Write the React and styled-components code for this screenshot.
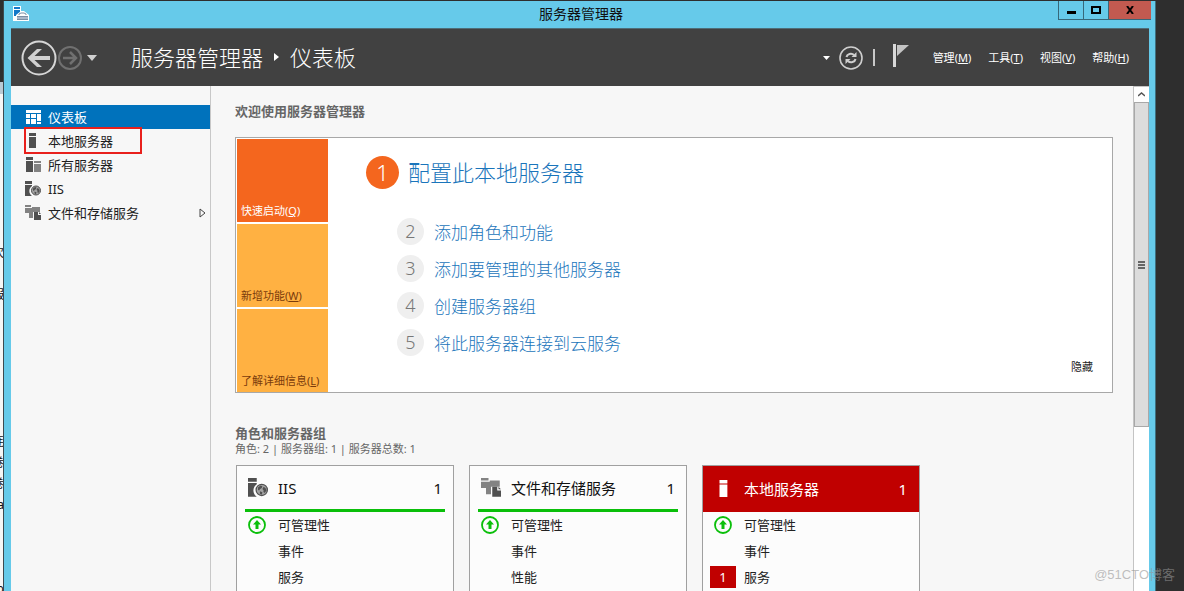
import styled, { createGlobalStyle, css } from 'styled-components';

//DATA
const navItems = [
  { label: '仪表板', icon: 'dashboard', active: true },
  { label: '本地服务器', icon: 'server', marked: true },
  { label: '所有服务器', icon: 'servers' },
  { label: 'IIS', icon: 'iis' },
  { label: '文件和存储服务', icon: 'files', expandable: true },
];

const menus = [
  { label: '管理', hotkey: 'M' },
  { label: '工具', hotkey: 'T' },
  { label: '视图', hotkey: 'V' },
  { label: '帮助', hotkey: 'H' },
];

const tabs = [
  { label: '快速启动', hotkey: 'Q', active: true },
  { label: '新增功能', hotkey: 'W' },
  { label: '了解详细信息', hotkey: 'L' },
];

const steps = [
  '配置此本地服务器',
  '添加角色和功能',
  '添加要管理的其他服务器',
  '创建服务器组',
  '将此服务器连接到云服务',
];

const cards = [
  { title: 'IIS', icon: 'iis', rows: ['可管理性', '事件', '服务'] },
  { title: '文件和存储服务', icon: 'files', rows: ['可管理性', '事件', '性能'] },
  { title: '本地服务器', icon: 'server', alert: '服务', rows: ['可管理性', '事件', '服务'] },
];

const backLines = ['次', '', '服', '', '', '', '', '', '', '连', '卷', '卷', 'a', '', '', '', 'b'];

//ICONS
const Icon = ({ name, size = 16 }) => (
  <svg width={size} height={size} viewBox="0 0 16 16" fill="currentColor" aria-hidden="true">
    {name === 'dashboard' && (
      <path d="M1 1h15v3H1zM1 5h4v4H1zM6 5h5v4H6zM12 5h4v7h-4zM1 10h4v5H1zM6 10h5v5H6zM12 13h4v2h-4z" />
    )}
    {name === 'server' && <path d="M4 0h7v3H4zM4 4h7v11H4z" />}
    {name === 'servers' && (
      <>
        <path d="M1 0h7v3H1zM1 4h7v11H1z" />
        <path d="M9 4h7v2H9zM9 7h7v8H9z" opacity="0.7" />
      </>
    )}
    {name === 'iis' && (
      <>
        <path d="M0 0h7v3H0zM0 4h7v1a6 6 0 0 0 0 10H0z" />
        <circle cx="11" cy="9.500" r="4.500" fill="#a4a4a4" stroke="currentColor" strokeWidth="1" />
        <path d="M8 7.500l2-1.500 1.500.5-.5 1.500L9.500 9l-.5 1-1-.5zM12.500 7l1.500 1 .8 2-1.500 2-1-.8.2-1.500-1-1zM9.500 10.500l2 .8-.5 2-1.500-.8z" />
      </>
    )}
    {name === 'files' && (
      <>
        <path d="M0 0h6v2H0zM0 3h7V2h8v5H8v6H4V8H0z" opacity="0.7" />
        <path d="M9 7h4v3h3v5H9zM14 7l2 2h-2z" />
      </>
    )}
  </svg>
);

const AppIcon = () => (
  <svg width="16" height="16" viewBox="0 0 16 16" aria-hidden="true">
    <path d="M0 0h8v15H0z" fill="#fff" />
    <path d="M1 1h6v2H1zM1 4h6v3L4 9v1H1z" fill="#1378c8" />
    <path d="M3 9l5-4h3l5 4v6H3z" fill="#fff" />
    <path d="M4 10h11v4H4z" fill="#7c8ea4" />
    <path d="M6 9V8l2-1h3l2 1v1" fill="none" stroke="#7c8ea4" />
    <path d="M4 12h11" stroke="#d8e2ee" />
  </svg>
);

const BackIcon = () => (
  <svg width="36" height="36" viewBox="0 0 36 36" aria-hidden="true">
    <circle cx="18" cy="18" r="16.500" fill="none" stroke="#d6d6d6" strokeWidth="2" />
    <path d="M6.500 18L16 9h5l-7.500 7H29v4H13.500l7.500 7h-5z" fill="#d0d0d0" />
  </svg>
);

const ForwardIcon = () => (
  <svg width="24" height="24" viewBox="0 0 24 24" fill="none" stroke="#707070" aria-hidden="true">
    <circle cx="12" cy="12" r="11" strokeWidth="2" />
    <path d="M5 12h13M12 6l6 6-6 6" strokeWidth="2.500" />
  </svg>
);

const RefreshIcon = () => (
  <svg width="24" height="24" viewBox="0 0 24 24" fill="none" stroke="#cfcfcf" aria-hidden="true">
    <circle cx="12" cy="12" r="11" strokeWidth="1.600" />
    <path d="M7.500 11c.5-3 5-4.500 7.500-2M16.500 13c-.5 3-5 4.500-7.500 2" strokeWidth="2" />
    <path d="M17.500 6v5h-5zM6.500 18v-5h5z" fill="#cfcfcf" stroke="none" />
  </svg>
);

const FlagIcon = () => (
  <svg width="16" height="23" viewBox="0 0 16 23" aria-hidden="true">
    <path d="M0 0h3v23H0z" fill="#d8d8d8" />
    <path d="M4 1h12L4 12z" fill="#c4c4c4" />
  </svg>
);

const UpIcon = () => (
  <svg width="18" height="18" viewBox="0 0 18 18" aria-hidden="true">
    <circle cx="9" cy="9" r="8" fill="none" stroke="#0abf0a" strokeWidth="1.800" />
    <path d="M9 4l4 4.500h-2.500V13h-3V8.500H5z" fill="#0abf0a" />
  </svg>
);

const App = () => {
  return (
    <Desktop>
      <GlobalStyle />
      <BackWindow aria-hidden="true">
        {backLines.map((line, i) => (
          <span key={i}>{line}</span>
        ))}
      </BackWindow>
      <Window>
        <TitleBar>
          <AppIcon />
          <h1>服务器管理器</h1>
          <WindowButtons>
            <WindowButton aria-label="最小化">
              <svg width="10" height="8"><path d="M1 5h9v3H1z" /></svg>
            </WindowButton>
            <WindowButton aria-label="最大化">
              <svg width="10" height="8"><path d="M1 1h8v6H1z" fill="none" stroke="#000" strokeWidth="2" /></svg>
            </WindowButton>
            <WindowButton $close aria-label="关闭">
              <svg width="8" height="8"><path d="M1 0l6 8M7 0L1 8" stroke="#000" strokeWidth="2" /></svg>
            </WindowButton>
          </WindowButtons>
        </TitleBar>

        <Toolbar>
          <History>
            <IconButton aria-label="后退"><BackIcon /></IconButton>
            <IconButton aria-label="前进"><ForwardIcon /></IconButton>
            <HistoryButton aria-label="历史记录">
              <svg width="10" height="6"><path d="M0 0h10L5 6z" fill="#d0d0d0" /></svg>
            </HistoryButton>
          </History>
          <Breadcrumb>
            <span>服务器管理器</span>
            <svg width="5" height="8"><path d="M0 0l5 4-5 4z" fill="#fff" /></svg>
            <span>仪表板</span>
          </Breadcrumb>
          <Tools>
            <IconButton aria-label="更多">
              <svg width="7" height="4"><path d="M0 0h7L3.500 4z" fill="#fff" /></svg>
            </IconButton>
            <IconButton aria-label="刷新"><RefreshIcon /></IconButton>
            <Separator />
            <IconButton aria-label="通知"><FlagIcon /></IconButton>
          </Tools>
          <Menus>
            {menus.map((menu) => (
              <MenuButton key={menu.hotkey}>
                {menu.label}(<u>{menu.hotkey}</u>)
              </MenuButton>
            ))}
          </Menus>
        </Toolbar>

        <Body>
          <Sidebar>
            {navItems.map((item) => (
              <NavLink key={item.label} href="#" $active={item.active} $marked={item.marked}>
                <Icon name={item.icon} />
                <span>{item.label}</span>
                {item.expandable && (
                  <svg width="7" height="10">
                    <path d="M1 1l5 4-5 4z" fill="none" stroke="#444" />
                  </svg>
                )}
              </NavLink>
            ))}
          </Sidebar>

          <Main>
            <WelcomeTitle>欢迎使用服务器管理器</WelcomeTitle>
            <Welcome>
              <Tabs>
                {tabs.map((tab) => (
                  <Tab key={tab.hotkey} $active={tab.active}>
                    <span>{tab.label}(<u>{tab.hotkey}</u>)</span>
                  </Tab>
                ))}
              </Tabs>
              <Steps>
                {steps.map((step, i) => (
                  <Step key={step} $first={i === 0}>
                    <b>{i + 1}</b>
                    <a href="#">{step}</a>
                  </Step>
                ))}
              </Steps>
              <HideButton>隐藏</HideButton>
            </Welcome>

            <GroupsTitle>角色和服务器组</GroupsTitle>
            <Summary>角色: 2 | 服务器组: 1 | 服务器总数: 1</Summary>
            <Cards>
              {cards.map((card) => (
                <Card key={card.title}>
                  <CardHeader $alert={card.alert}>
                    <Icon name={card.icon} size={card.alert ? 18 : 20} />
                    <h3>{card.title}</h3>
                    <span>1</span>
                  </CardHeader>
                  {card.rows.map((row) => (
                    <CardRow key={row}>
                      <Status>
                        {row === '可管理性' && <UpIcon />}
                        {row === card.alert && <Badge>1</Badge>}
                      </Status>
                      <a href="#">{row}</a>
                    </CardRow>
                  ))}
                </Card>
              ))}
            </Cards>
          </Main>

          <Scrollbar>
            <ScrollButton aria-label="向上滚动">
              <svg width="7" height="5"><path d="M0 4l3.500-3L7 4" fill="none" stroke="#555" strokeWidth="1.500" /></svg>
            </ScrollButton>
            <Thumb>
              <svg width="7" height="8"><path d="M0 1h7M0 4h7M0 7h7" stroke="#666" strokeWidth="2" /></svg>
            </Thumb>
          </Scrollbar>
        </Body>
      </Window>
      <Watermark>@51CTO博客</Watermark>
    </Desktop>
  );
};

//Styled Components
const GlobalStyle = createGlobalStyle`
  * {
    box-sizing: border-box;
    margin: 0;
    padding: 0;
  }
  body {
    font-family: 'Noto Sans', 'Noto Sans CJK SC', sans-serif;
    font-size: 13px;
    color: #222;
    background: #2e2e2e;
  }
  button {
    font: inherit;
    color: inherit;
    border: none;
    background: none;
  }
  a {
    color: inherit;
    text-decoration: none;
  }
  svg {
    display: block;
    flex: none;
  }
`;

const Desktop = styled.div`
  position: relative;
  display: flex;
  height: 100vh;
  padding: 1px 29px 0 0;
  overflow: hidden;
`;

const BackWindow = styled.div`
  display: flex;
  flex-direction: column;
  flex: none;
  width: 4px;
  margin-top: 81px;
  padding-top: 148px;
  overflow: hidden;
  border-top: 12px solid #b9c9d3;
  background: #f6f6f6;
  font-size: 12px;
  color: #111;
  span {
    display: flex;
    justify-content: flex-end;
    flex: none;
    height: 21px;
    line-height: 21px;
  }
`;

const Window = styled.div`
  display: flex;
  flex-direction: column;
  flex: 1;
  min-width: 0;
  border: solid #66caea;
  border-width: 0 6px 0 7px;
  box-shadow: 1px 0 #3c6f80, -1px 0 #3c4a50;
`;

const TitleBar = styled.header`
  display: grid;
  grid-template-columns: 1fr auto 1fr;
  flex: none;
  height: 27px;
  padding-left: 2px;
  background: #66caea;
  > svg {
    margin-top: 5px;
  }
  h1 {
    font-size: 14px;
    font-weight: normal;
    line-height: 26px;
    color: #111;
  }
`;

const WindowButtons = styled.div`
  display: flex;
  justify-self: end;
  height: 19px;
  margin-right: -2px;
`;

const WindowButton = styled.button`
  display: flex;
  align-items: center;
  justify-content: center;
  width: ${({ $close }) => ($close ? '43px' : '25px')};
  border: solid #37687a;
  border-width: 0 0 1px 1px;
  background: ${({ $close }) => ($close ? '#c25a50' : 'transparent')};
`;

const Toolbar = styled.div`
  display: flex;
  align-items: center;
  flex: none;
  height: 58px;
  padding: 0 20px 0 10px;
  border-top: 1px solid #4f6d78;
  background: #414141;
  color: #fff;
`;

const IconButton = styled.button`
  flex: none;
`;

const History = styled.div`
  display: flex;
  align-items: center;
  gap: 1px;
`;

const HistoryButton = styled(IconButton)`
  margin-left: 4px;
`;

const Breadcrumb = styled.div`
  display: flex;
  align-items: center;
  gap: 11px;
  margin-left: 34px;
  padding-bottom: 2px;
  font-size: 22px;
  font-weight: 300;
  line-height: 30px;
  white-space: nowrap;
`;

const Tools = styled.div`
  display: flex;
  align-items: center;
  gap: 9px;
  margin-left: auto;
  ${IconButton}:last-child {
    margin: 0 0 4px 9px;
  }
`;

const Separator = styled.span`
  width: 2px;
  height: 17px;
  margin-left: 1px;
  background: #c8c8c8;
`;

const Menus = styled.nav`
  display: flex;
  gap: 17px;
  margin-left: 24px;
`;

const MenuButton = styled.button`
  font-size: 11px;
  line-height: 16px;
  white-space: nowrap;
`;

const Body = styled.div`
  display: flex;
  flex: 1;
  min-height: 0;
  background: #f7f7f7;
`;

const Sidebar = styled.nav`
  flex: none;
  width: 200px;
  padding-top: 19px;
  border-right: 1px solid #c8c8c8;
`;

const NavLink = styled.a`
  position: relative;
  display: flex;
  align-items: center;
  gap: 7px;
  height: 24px;
  padding: 0 4px 0 14px;
  color: #1e1e1e;
  > svg:first-child {
    color: #505050;
  }
  span {
    flex: 1;
    line-height: 22px;
  }
  ${({ $active }) =>
    $active &&
    css`
      background: #0072bc;
      color: #fff;
      > svg:first-child {
        color: #fff;
      }
    `}
  ${({ $marked }) =>
    $marked &&
    css`
      &::after {
        content: '';
        position: absolute;
        inset: -2px 68px -1px 13px;
        border: 2px solid #e8201c;
      }
    `}
`;

const Main = styled.main`
  flex: 1;
  min-width: 0;
  padding: 15px 20px 0 24px;
  overflow: hidden;
`;

const WelcomeTitle = styled.h2`
  font-size: 13px;
  line-height: 20px;
  color: #666;
`;

const Welcome = styled.section`
  display: flex;
  margin-top: 16px;
  padding: 1px 1px 0;
  border: 1px solid #a8a8a8;
  background: #fff;
`;

const Tabs = styled.div`
  display: flex;
  flex-direction: column;
  flex: none;
  gap: 2px;
  width: 91px;
`;

const Tab = styled.button`
  display: flex;
  align-items: flex-end;
  height: 83px;
  padding: 0 4px 3px;
  background: ${({ $active }) => ($active ? '#f4661e' : '#ffb142')};
  color: ${({ $active }) => ($active ? '#fff' : '#7a3b0c')};
  font-size: 11px;
  line-height: 16px;
  white-space: nowrap;
`;

const Steps = styled.ol`
  flex: 1;
  padding: 17px 0 0 38px;
  list-style: none;
`;

const Step = styled.li`
  display: flex;
  align-items: center;
  gap: 10px;
  height: 37px;
  padding-left: 31px;
  font-size: 17px;
  font-weight: 300;
  color: #1a75bb;
  a {
    padding-bottom: 1px;
  }
  b {
    width: 27px;
    border-radius: 50%;
    background: #efefef;
    color: #777;
    font-size: 18px;
    font-weight: 300;
    line-height: 27px;
    text-align: center;
  }
  ${({ $first }) =>
    $first &&
    css`
      gap: 9px;
      height: 33px;
      margin-bottom: 24px;
      padding-left: 0;
      font-size: 22px;
      a {
        padding-bottom: 3px;
      }
      b {
        width: 33px;
        background: #f4661e;
        color: #fff;
        font-size: 22px;
        line-height: 33px;
      }
    `}
`;

const HideButton = styled.button`
  align-self: flex-end;
  margin: 0 18px 17px 0;
  font-size: 11px;
  line-height: 16px;
`;

const GroupsTitle = styled.h2`
  margin-top: 31px;
  font-size: 13px;
  line-height: 18px;
  color: #666;
`;

const Summary = styled.p`
  font-size: 11px;
  line-height: 14px;
  color: #666;
`;

const Cards = styled.div`
  display: flex;
  gap: 15px;
  margin: 9px 0 0 1px;
`;

const Card = styled.article`
  width: 218px;
  min-height: 220px;
  border: 1px solid #a0a0a0;
  background: #fcfcfc;
`;

const CardHeader = styled.header`
  display: flex;
  align-items: center;
  gap: 10px;
  height: 46px;
  margin: 0 8px;
  padding: 0 3px;
  border-bottom: 3px solid #0abf0a;
  color: #111;
  svg {
    color: #505050;
  }
  h3 {
    flex: 1;
  }
  h3,
  span {
    font-size: 15px;
    font-weight: normal;
    line-height: 20px;
  }
  ${({ $alert }) =>
    $alert &&
    css`
      gap: 11px;
      margin: 0;
      padding: 0 12px;
      border: none;
      background: #c00000;
      &,
      svg {
        color: #fff;
      }
    `}
`;

const CardRow = styled.div`
  display: flex;
  align-items: center;
  gap: 8px;
  height: 26px;
  padding-left: 7px;
  line-height: 20px;
`;

const Status = styled.span`
  display: flex;
  justify-content: center;
  width: 26px;
`;

const Badge = styled.span`
  width: 26px;
  background: #c00000;
  color: #fff;
  line-height: 22px;
  text-align: center;
`;

const Scrollbar = styled.div`
  flex: none;
  width: 16px;
  border-left: 1px solid #c4c4c4;
  background: #fff;
`;

const ScrollButton = styled.button`
  display: flex;
  align-items: center;
  justify-content: center;
  width: 100%;
  height: 16px;
  border-top: 1px solid #c4c4c4;
`;

const Thumb = styled.div`
  display: flex;
  align-items: center;
  justify-content: center;
  height: 325px;
  border: 1px solid #a8a8a8;
  background: #dcdcdc;
`;

const Watermark = styled.span`
  position: absolute;
  right: 9px;
  bottom: 6px;
  font-family: 'Liberation Sans', 'Noto Sans CJK SC', sans-serif;
  font-size: 13px;
  line-height: 20px;
  color: rgba(150, 150, 150, 0.6);
`;

export default App;
